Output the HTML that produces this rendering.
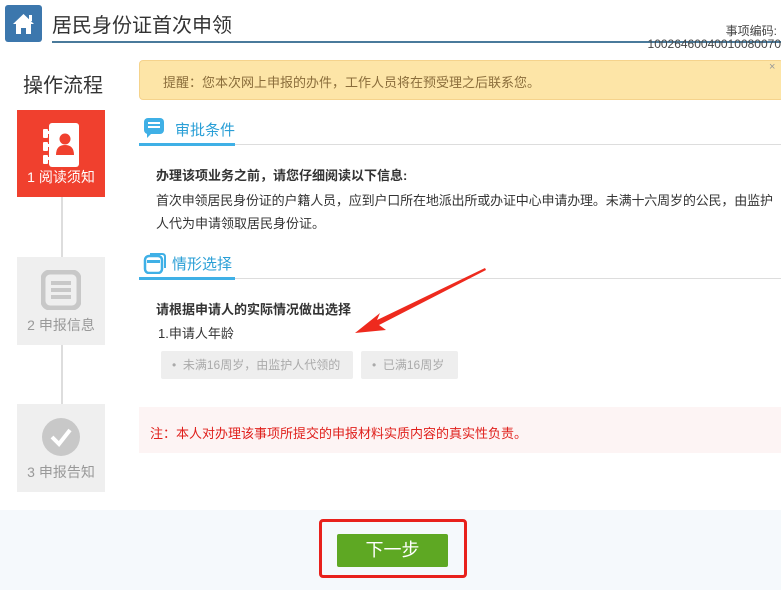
<!DOCTYPE html>
<html><head><meta charset="utf-8"><style>
*{margin:0;padding:0;box-sizing:border-box}
body{width:781px;height:606px;background:#fff;font-family:"Liberation Sans","Noto Sans CJK SC",sans-serif;position:relative;overflow:hidden;color:#333}
.a{position:absolute;white-space:nowrap}
.step{position:absolute;left:17px;width:88px;height:88px;background:#efefef;color:#999;font-size:14px;text-align:center}
.step .t{position:absolute;bottom:10px;left:0;right:0}
.vl{position:absolute;left:61px;width:2px;background:#ddd}
.opt{position:absolute;top:351px;height:28px;background:#eee;border-radius:2px;color:#aaa;font-size:12px;line-height:28px;padding-left:11px;white-space:nowrap;overflow:hidden}
</style></head><body>
<div class="a" style="left:5px;top:5px;width:37px;height:37px;background:#3c77ad;border-radius:3px">
<svg width="37" height="37" viewBox="0 0 37 37"><path d="M8 19 L18.5 9 L29 19 L26 19 L26 29 L21 29 L21 23 L16 23 L16 29 L11 29 L11 19 Z" fill="#fff"/><rect x="24" y="10" width="3" height="6" fill="#fff"/></svg></div>
<div class="a" style="left:52px;top:9px;font-size:20px;color:#333">居民身份证首次申领</div>
<div class="a" style="left:52px;top:41px;width:729px;height:2px;background:#4a7a9b"></div>
<div class="a" style="right:4px;top:22px;font-size:12px;color:#444">事项编码:</div>
<div class="a" style="right:0;top:37px;font-size:12px;color:#444">10026460040010080070</div>
<div class="a" style="left:23px;top:69px;font-size:20px;color:#333">操作流程</div>
<div class="step" style="top:110px;height:87px;background:#f0402e;color:#fff">
<svg style="position:absolute;left:22px;top:12px" width="44" height="50" viewBox="0 0 44 50"><rect x="10" y="1" width="30" height="44" rx="3" fill="#fff"/><rect x="4" y="7" width="5" height="9" rx="1" fill="#fff"/><rect x="4" y="20" width="5" height="9" rx="1" fill="#fff"/><rect x="4" y="33" width="5" height="9" rx="1" fill="#fff"/><rect x="7" y="9" width="6" height="3" fill="#fff"/><rect x="7" y="22" width="6" height="3" fill="#fff"/><rect x="7" y="35" width="6" height="3" fill="#fff"/><circle cx="26" cy="17" r="5.5" fill="#f0402e"/><path d="M17 33 Q17 23 26 23 Q35 23 35 33 Z" fill="#f0402e"/></svg>
<div class="t">1 阅读须知</div></div>
<div class="vl" style="top:197px;height:60px"></div>
<div class="step" style="top:257px">
<svg style="position:absolute;left:24px;top:13px" width="40" height="40" viewBox="0 0 40 40"><rect x="2" y="2" width="36" height="36" rx="7" fill="none" stroke="#c8c8c8" stroke-width="5"/><rect x="10" y="11" width="20" height="4" fill="#c8c8c8"/><rect x="10" y="18" width="20" height="4" fill="#c8c8c8"/><rect x="10" y="25" width="20" height="4" fill="#c8c8c8"/></svg>
<div class="t">2 申报信息</div></div>
<div class="vl" style="top:345px;height:59px"></div>
<div class="step" style="top:404px">
<svg style="position:absolute;left:24px;top:13px" width="40" height="40" viewBox="0 0 40 40"><circle cx="20" cy="20" r="19" fill="#c8c8c8"/><path d="M11 20 L18 27 L29 13" fill="none" stroke="#fff" stroke-width="4"/></svg>
<div class="t">3 申报告知</div></div>
<div class="a" style="left:139px;top:60px;width:645px;height:40px;background:#fde5a7;border:1px solid #f5d38c;border-radius:4px"></div>
<div class="a" style="left:163px;top:72px;font-size:13px;color:#8a6d3b">提醒：您本次网上申报的办件，工作人员将在预受理之后联系您。</div>
<div class="a" style="left:769px;top:61px;font-size:11px;color:#999">×</div>
<svg class="a" style="left:143px;top:117px" width="22" height="22" viewBox="0 0 22 22"><rect x="1" y="1" width="20" height="16" rx="4" fill="#3fb0e6"/><path d="M4 16 L4 21 L9 16Z" fill="#3fb0e6"/><rect x="5" y="5" width="12" height="2" fill="#fff"/><rect x="5" y="9" width="12" height="2" fill="#fff"/></svg>
<div class="a" style="left:175px;top:119px;font-size:15px;color:#2a9fd6">审批条件</div>
<div class="a" style="left:139px;top:144px;width:642px;height:1px;background:#ddd"></div>
<div class="a" style="left:139px;top:143px;width:96px;height:3px;background:#3fb0e6"></div>
<div class="a" style="left:156px;top:165px;font-size:13px;font-weight:bold;color:#333">办理该项业务之前，请您仔细阅读以下信息:</div>
<div class="a" style="left:156px;top:190px;font-size:13px;color:#333;letter-spacing:-0.15px">首次申领居民身份证的户籍人员，应到户口所在地派出所或办证中心申请办理。未满十六周岁的公民，由监护</div>
<div class="a" style="left:156px;top:213px;font-size:13px;color:#333">人代为申请领取居民身份证。</div>
<svg class="a" style="left:143px;top:252px" width="24" height="22" viewBox="0 0 24 22"><rect x="2" y="4" width="17" height="17" rx="4" fill="none" stroke="#3fb0e6" stroke-width="2.5"/><path d="M7 2 L19 2 Q22 2 22 5 L22 16" fill="none" stroke="#3fb0e6" stroke-width="2"/><rect x="4" y="8" width="13" height="3" fill="#3fb0e6"/></svg>
<div class="a" style="left:172px;top:253px;font-size:15px;color:#2a9fd6">情形选择</div>
<div class="a" style="left:139px;top:278px;width:642px;height:1px;background:#ddd"></div>
<div class="a" style="left:139px;top:277px;width:96px;height:3px;background:#3fb0e6"></div>
<div class="a" style="left:156px;top:299px;font-size:13px;font-weight:bold;color:#333">请根据申请人的实际情况做出选择</div>
<div class="a" style="left:158px;top:323px;font-size:13px;color:#333">1.申请人年龄</div>
<div class="opt" style="left:161px;width:192px">•&nbsp;&nbsp;未满16周岁，由监护人代领的</div>
<div class="opt" style="left:361px;width:97px">•&nbsp;&nbsp;已满16周岁</div>
<div class="a" style="left:139px;top:407px;width:642px;height:46px;background:#fdf4f4"></div>
<div class="a" style="left:150px;top:423px;font-size:13px;color:#e0201c">注：本人对办理该事项所提交的申报材料实质内容的真实性负责。</div>
<svg class="a" style="left:350px;top:262px" width="140" height="76" viewBox="0 0 140 76"><path d="M135 6 L27 58 L30 51 L5 71 L36 68 L29 63 L136 8 Z" fill="#ee2a1e"/></svg>
<div class="a" style="left:0;top:510px;width:781px;height:80px;background:#f5f9fc"></div>
<div class="a" style="left:319px;top:519px;width:148px;height:59px;border:3px solid #e8211c;border-radius:4px"></div>
<div class="a" style="left:337px;top:534px;width:111px;height:33px;background:#5ea823;border-radius:2px;color:#fff;font-size:18px;text-align:center;line-height:33px">下一步</div>
</body></html>
